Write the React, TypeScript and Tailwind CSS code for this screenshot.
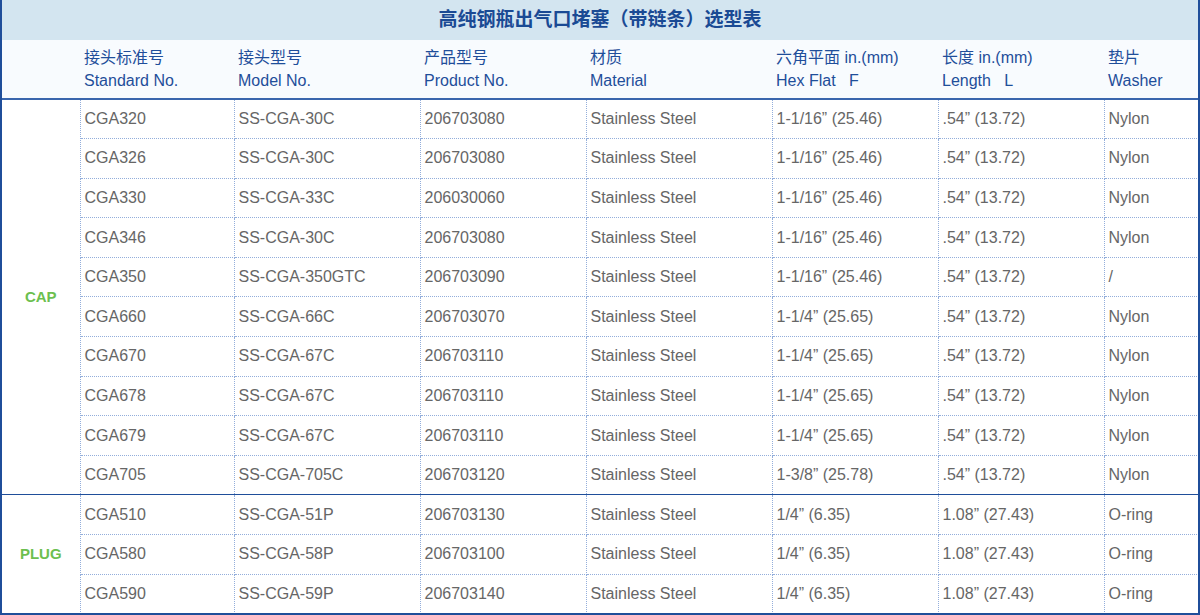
const cap = [
  ["CGA320", "SS-CGA-30C", "206703080", "1-1/16” (25.46)", ".54” (13.72)", "Nylon"],
  ["CGA326", "SS-CGA-30C", "206703080", "1-1/16” (25.46)", ".54” (13.72)", "Nylon"],
  ["CGA330", "SS-CGA-33C", "206030060", "1-1/16” (25.46)", ".54” (13.72)", "Nylon"],
  ["CGA346", "SS-CGA-30C", "206703080", "1-1/16” (25.46)", ".54” (13.72)", "Nylon"],
  ["CGA350", "SS-CGA-350GTC", "206703090", "1-1/16” (25.46)", ".54” (13.72)", "/"],
  ["CGA660", "SS-CGA-66C", "206703070", "1-1/4” (25.65)", ".54” (13.72)", "Nylon"],
  ["CGA670", "SS-CGA-67C", "206703110", "1-1/4” (25.65)", ".54” (13.72)", "Nylon"],
  ["CGA678", "SS-CGA-67C", "206703110", "1-1/4” (25.65)", ".54” (13.72)", "Nylon"],
  ["CGA679", "SS-CGA-67C", "206703110", "1-1/4” (25.65)", ".54” (13.72)", "Nylon"],
  ["CGA705", "SS-CGA-705C", "206703120", "1-3/8” (25.78)", ".54” (13.72)", "Nylon"],
];
const plug = [
  ["CGA510", "SS-CGA-51P", "206703130", "1/4” (6.35)", "1.08” (27.43)", "O-ring"],
  ["CGA580", "SS-CGA-58P", "206703100", "1/4” (6.35)", "1.08” (27.43)", "O-ring"],
  ["CGA590", "SS-CGA-59P", "206703140", "1/4” (6.35)", "1.08” (27.43)", "O-ring"],
];

const heads = [
  ["接头标准号", "Standard No."],
  ["接头型号", "Model No."],
  ["产品型号", "Product No."],
  ["材质", "Material"],
  ["六角平面 in.(mm)", "Hex Flat   F"],
  ["长度 in.(mm)", "Length   L"],
  ["垫片", "Washer"],
];
const widths = [78, 154, 186, 166, 186, 166, 166, 94];
const cell = "border border-dotted border-[#93aedb] px-[4px] align-middle whitespace-nowrap";

function Group({ name, rows }: { name: string; rows: string[][] }) {
  return (
    <>
      {rows.map((r, i) => (
        <tr key={r[0]} className={`h-[39.6px] ${i === 0 ? "border-t border-solid border-t-[#1f4e9a]" : ""}`}>
          {i === 0 && (
            <td rowSpan={rows.length} className="text-center font-bold text-[#6cbf4f] text-[15px] border-r border-dotted border-[#93aedb]">
              {name}
            </td>
          )}
          <td className={cell}>{r[0]}</td>
          <td className={cell}>{r[1]}</td>
          <td className={cell}>{r[2]}</td>
          <td className={cell}>Stainless Steel</td>
          <td className={cell}>{r[3]}</td>
          <td className={cell}>{r[4]}</td>
          <td className={cell}>{r[5]}</td>
        </tr>
      ))}
    </>
  );
}

export default function App() {
  return (
    <div className="w-[1200px] h-[615px] overflow-hidden bg-white border-2 border-[#1f4e9a] border-t-0" style={{ fontFamily: "'Liberation Sans', 'Noto Sans CJK SC', sans-serif" }}>
      <div className="h-[40px] bg-[#d3e5f0] flex items-center justify-center text-[#1a4a94] text-[19px] font-bold">
        高纯钢瓶出气口堵塞（带链条）选型表
      </div>
      <table className="border-collapse table-fixed w-[1196px] text-[16px] text-[#666]">
        <colgroup>
          {widths.map((w, i) => (
            <col key={i} style={{ width: w }} />
          ))}
        </colgroup>
        <thead>
          <tr className="h-[59px] bg-[#f8fbfe] border-b-2 border-[#3a66ad]">
            <th />
            {heads.map((h) => (
              <th key={h[1]} className="text-left font-normal text-[#1f4e9a] px-[4px] leading-[23px] align-middle">
                <div className="text-[16px]">{h[0]}</div>
                <div className="whitespace-pre">{h[1]}</div>
              </th>
            ))}
          </tr>
        </thead>
        <tbody>
          <Group name="CAP" rows={cap} />
          <Group name="PLUG" rows={plug} />
        </tbody>
      </table>
    </div>
  );
}
